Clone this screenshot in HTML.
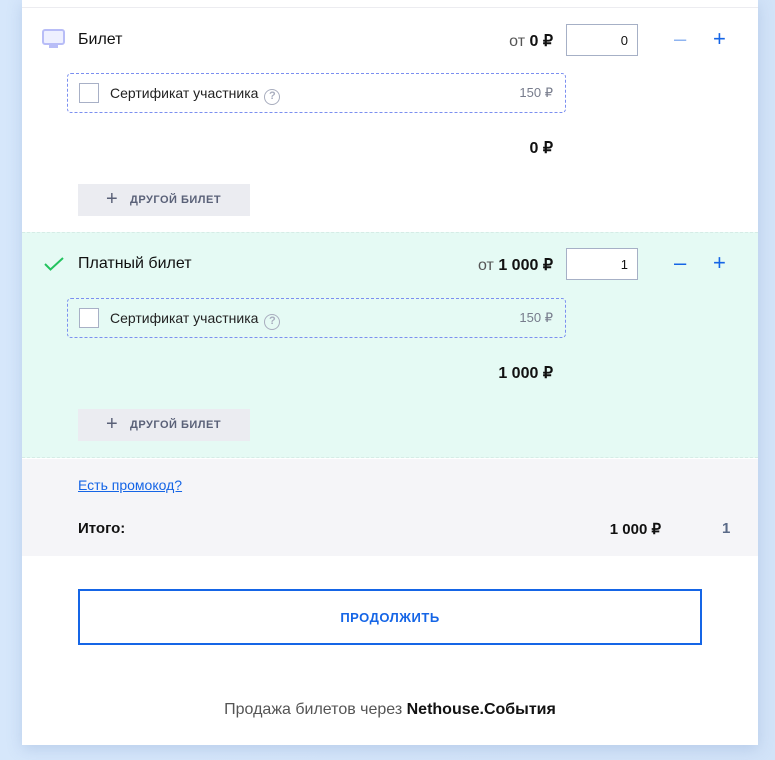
<!DOCTYPE html><html><head><meta charset="utf-8"><style>
*{box-sizing:border-box;margin:0;padding:0}
body{width:775px;height:760px;overflow:hidden;background:linear-gradient(90deg,#d6e7fb,#d2e3f8);font-family:"Liberation Sans",sans-serif;position:relative}
.card{position:absolute;left:22px;top:0;width:736px;height:745px;background:#fff;box-shadow:0 4px 14px rgba(120,150,200,.3)}
.a{position:absolute}
.t{font-size:16px;color:#111}
.cert{position:absolute;left:45px;width:499px;height:40px;border:1px dashed #7b8ff0;border-radius:4px}
.cb{position:absolute;left:11px;top:9px;width:20px;height:20px;border:1px solid #a8b0c6;background:#fff}
.cl{position:absolute;left:42px;top:11px;font-size:14px;color:#222}
.q{display:inline-block;width:16px;height:16px;border:1.5px solid #a8adbe;border-radius:50%;font-size:11px;color:#a8adbe;text-align:center;line-height:13px;font-weight:bold;margin-left:6px;vertical-align:-1px}
.cp{position:absolute;right:12px;top:11px;font-size:13px;color:#777c8c}
.inp{position:absolute;left:544px;width:72px;height:32px;border:1px solid #a6b0c6;background:#fff;font-size:13px;text-align:right;padding:8px 9px 0 0;color:#111}
.btn2{position:absolute;left:56px;width:172px;height:32px;background:#ebecf1;font-size:11px;font-weight:bold;color:#5a6178;letter-spacing:.5px;padding:10px 0 0 52px}
.btn2 span{position:absolute;left:28px;top:4px;font-size:20px;font-weight:normal;color:#5a6178}
.m{position:absolute;font-size:22px;color:#1565e6}
</style></head><body>
<div class="card">
<div class="a" style="left:0;top:7px;width:736px;height:1px;background:#ececf0"></div>
<svg class="a" style="left:20px;top:29px" width="24" height="20" viewBox="0 0 24 20"><rect x="1" y="1" width="21" height="14" rx="2" fill="#eef0ff" stroke="#b8bdf7" stroke-width="2"/><rect x="7" y="16" width="9" height="3" fill="#b8bdf7"/></svg>
<div class="a t" style="left:56px;top:31px">Билет</div>
<div class="a" style="right:205px;top:31px;font-size:16px;color:#555"><span>от </span><b style="color:#111">0 ₽</b></div>
<div class="inp" style="top:24px">0</div>
<div class="m" style="left:652px;top:26px;color:#8fb4f0">–</div>
<div class="m" style="left:691px;top:26px">+</div>
<div class="cert" style="top:73px"><div class="cb"></div><div class="cl">Сертификат участника<span class="q">?</span></div><div class="cp">150 ₽</div></div>
<div class="a" style="right:205px;top:138px;font-size:16px;font-weight:bold;color:#111">0 ₽</div>
<div class="btn2" style="top:184px"><span>+</span>ДРУГОЙ БИЛЕТ</div>

<div class="a" style="left:0;top:232px;width:736px;height:226px;background:#e5faf4;border-top:1px dashed #d5ece6;border-bottom:1px dashed #d5ece6"></div>
<svg class="a" style="left:22px;top:257px" width="20" height="14" viewBox="0 0 20 14"><path d="M1 7l5.5 5.5L19 1" fill="none" stroke="#22c35e" stroke-width="2"/></svg>
<div class="a t" style="left:56px;top:255px">Платный билет</div>
<div class="a" style="right:205px;top:255px;font-size:16px;color:#555"><span>от </span><b style="color:#111">1 000 ₽</b></div>
<div class="inp" style="top:248px">1</div>
<div class="m" style="left:652px;top:250px">–</div>
<div class="m" style="left:691px;top:250px">+</div>
<div class="cert" style="top:298px"><div class="cb"></div><div class="cl">Сертификат участника<span class="q">?</span></div><div class="cp">150 ₽</div></div>
<div class="a" style="right:205px;top:363px;font-size:16px;font-weight:bold;color:#111">1 000 ₽</div>
<div class="btn2" style="top:409px"><span>+</span>ДРУГОЙ БИЛЕТ</div>

<div class="a" style="left:0;top:459px;width:736px;height:97px;background:#f5f5f8"></div>
<div class="a" style="left:56px;top:477px;font-size:14px;color:#1565e6;text-decoration:underline">Есть промокод?</div>
<div class="a" style="left:56px;top:520px;font-size:15px;font-weight:bold;color:#111">Итого:</div>
<div class="a" style="right:97px;top:520px;font-size:15px;font-weight:bold;color:#111">1 000 ₽</div>
<div class="a" style="left:700px;top:520px;font-size:15px;font-weight:bold;color:#5a6a88">1</div>

<div class="a" style="left:56px;top:589px;width:624px;height:56px;border:2px solid #1565e6;text-align:center;font-size:13px;font-weight:bold;color:#1565e6;padding-top:19px;letter-spacing:.5px">ПРОДОЛЖИТЬ</div>
<div class="a" style="left:0;top:701px;width:736px;text-align:center;font-size:16px;color:#555">Продажа билетов через <b style="color:#111">Nethouse.События</b></div>
</div>
</body></html>
